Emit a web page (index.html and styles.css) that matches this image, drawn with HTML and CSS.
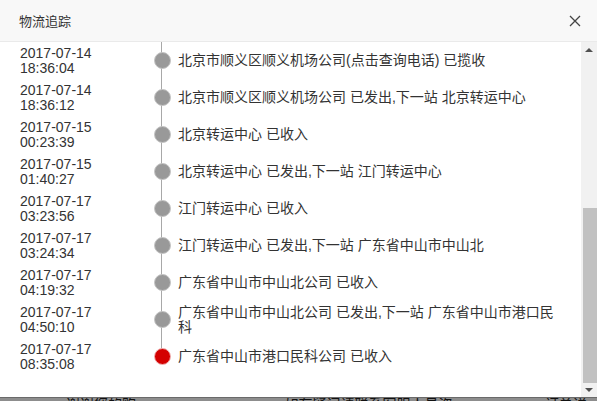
FILE: index.html
```html
<html>
<head>
  <title>物流追踪</title>
  <link rel="stylesheet" href="styles.css">
</head>
<body>
  <div class="dialog">
    <div class="dialog-head">
      <span class="dialog-title">物流追踪</span>
      <span class="dialog-close">
        <svg width="12" height="12" viewBox="0 0 12 12">
          <path d="M1 1 L11 11 M11 1 L1 11" stroke="#444" stroke-width="1.3" fill="none"/>
        </svg>
      </span>
    </div>
    <div class="dialog-body">
      <div class="track-list">
        <div class="track-row">
          <div class="track-time">2017-07-14<br>18:36:04</div>
          <div class="track-node"><span class="dot"></span></div>
          <div class="track-text">北京市顺义区顺义机场公司(点击查询电话) 已揽收</div>
        </div>
        <div class="track-row">
          <div class="track-time">2017-07-14<br>18:36:12</div>
          <div class="track-node"><span class="dot"></span></div>
          <div class="track-text">北京市顺义区顺义机场公司 已发出,下一站 北京转运中心</div>
        </div>
        <div class="track-row">
          <div class="track-time">2017-07-15<br>00:23:39</div>
          <div class="track-node"><span class="dot"></span></div>
          <div class="track-text">北京转运中心 已收入</div>
        </div>
        <div class="track-row">
          <div class="track-time">2017-07-15<br>01:40:27</div>
          <div class="track-node"><span class="dot"></span></div>
          <div class="track-text">北京转运中心 已发出,下一站 江门转运中心</div>
        </div>
        <div class="track-row">
          <div class="track-time">2017-07-17<br>03:23:56</div>
          <div class="track-node"><span class="dot"></span></div>
          <div class="track-text">江门转运中心 已收入</div>
        </div>
        <div class="track-row">
          <div class="track-time">2017-07-17<br>03:24:34</div>
          <div class="track-node"><span class="dot"></span></div>
          <div class="track-text">江门转运中心 已发出,下一站 广东省中山市中山北</div>
        </div>
        <div class="track-row">
          <div class="track-time">2017-07-17<br>04:19:32</div>
          <div class="track-node"><span class="dot"></span></div>
          <div class="track-text">广东省中山市中山北公司 已收入</div>
        </div>
        <div class="track-row">
          <div class="track-time">2017-07-17<br>04:50:10</div>
          <div class="track-node"><span class="dot"></span></div>
          <div class="track-text">广东省中山市中山北公司 已发出,下一站 广东省中山市港口民科</div>
        </div>
        <div class="track-row last">
          <div class="track-time">2017-07-17<br>08:35:08</div>
          <div class="track-node"><span class="dot current"></span></div>
          <div class="track-text">广东省中山市港口民科公司 已收入</div>
        </div>
      </div>
      <div class="scrollbar">
        <span class="arrow-up"></span>
        <div class="scroll-track"><div class="scroll-thumb"></div></div>
        <span class="arrow-down"></span>
      </div>
    </div>
  </div>
  <div class="page-behind">
    <span class="behind-a">谢谢您的购物</span>
    <span class="behind-b">如有疑问请联系客服人员咨询</span>
    <span class="behind-c">订单详情</span>
  </div>
</body>
</html>
```

FILE: styles.css
```css
/* Reset */
body, div, span {
  margin: 0;
  padding: 0;
  box-sizing: border-box;
}

body {
  font-family: "Liberation Sans", Arial, "Noto Sans CJK SC", sans-serif;
  color: #333;
  background: #fff;
  width: 597px;
  height: 401px;
  overflow: hidden;
}

/* Dialog */
.dialog {
  height: 397px;
  display: flex;
  flex-direction: column;
  background: #fff;
}

.dialog-head {
  height: 42px;
  flex: none;
  display: flex;
  align-items: center;
  justify-content: space-between;
  padding: 0 16px 0 19px;
  background: #f8f8f8;
  border-bottom: 1px solid #eaeaea;
}

.dialog-title {
  font-size: 13px;
  color: #333;
}

.dialog-close {
  display: flex;
  width: 12px;
  height: 12px;
}

.dialog-body {
  flex: 1;
  display: flex;
  overflow: hidden;
}

/* Timeline */
.track-list {
  flex: 1;
}

.track-row {
  height: 37px;
  display: flex;
  align-items: center;
  padding-left: 20px;
}

.track-time {
  width: 130px;
  font-size: 14px;
  line-height: 15px;
}

.track-node {
  position: relative;
  width: 24px;
  height: 100%;
  display: flex;
  align-items: center;
  justify-content: center;
}

.track-node::before {
  content: "";
  position: absolute;
  left: 11px;
  top: 0;
  bottom: 0;
  width: 1px;
  background: #a8a8a8;
}

.track-row.last .track-node::before {
  bottom: 50%;
}

.dot {
  position: relative;
  width: 17px;
  height: 17px;
  border-radius: 50%;
  background: #999;
  border: 1px solid #c4c4c4;
}

.dot.current {
  background: #d40000;
  border-color: #f0b4b4;
}

.track-text {
  flex: 1;
  padding: 0 16px 0 4px;
  font-size: 14px;
  line-height: 15px;
}

/* Scrollbar */
.scrollbar {
  width: 16px;
  flex: none;
  display: flex;
  flex-direction: column;
  align-items: center;
  background: #f1f1f1;
}

.arrow-up, .arrow-down {
  height: 14px;
  width: 16px;
  flex: none;
  position: relative;
}

.arrow-up::after, .arrow-down::after {
  content: "";
  position: absolute;
  left: 4px;
  border-left: 4px solid transparent;
  border-right: 4px solid transparent;
}

.arrow-up::after {
  top: 6px;
  border-bottom: 4px solid #505050;
}

.arrow-down::after {
  top: 5px;
  border-top: 4px solid #505050;
}

.scroll-track {
  flex: 1;
  width: 100%;
  display: flex;
  flex-direction: column;
  justify-content: flex-end;
  padding-left: 2px;
}

.scroll-thumb {
  height: 175px;
  background: #c1c1c1;
}

/* Page under the overlay */
.page-behind {
  height: 4px;
  background: #8d8d8d;
  border-top: 1px solid #6a6a6a;
  overflow: hidden;
  display: flex;
  font-size: 14px;
  line-height: 12px;
  color: #111;
}

.behind-a {
  margin-left: 66px;
}

.behind-b {
  margin-left: 140px;
}

.behind-c {
  margin-left: 90px;
}
```
